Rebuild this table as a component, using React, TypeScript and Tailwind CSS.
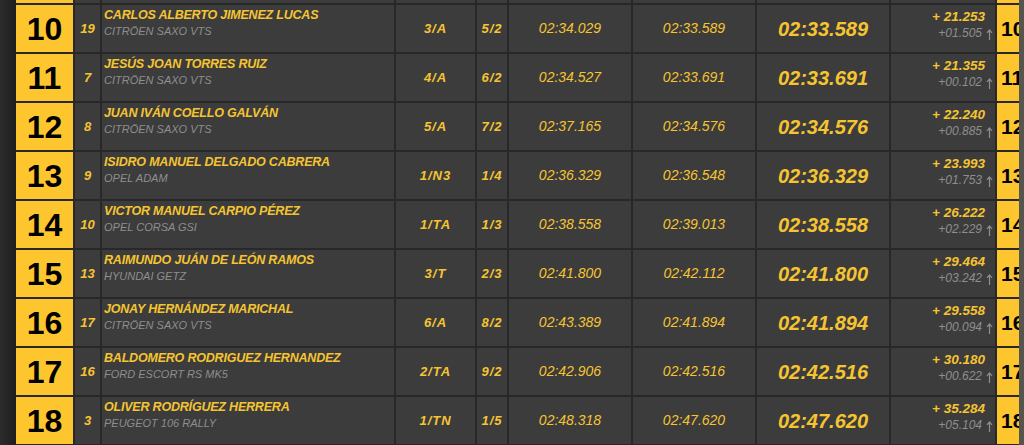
import React from "react";

type Row = {
  pos: string;
  num: string;
  driver: string;
  car: string;
  cls: string;
  cat: string;
  t1: string;
  t2: string;
  best: string;
  diff: string;
  prev: string;
};

const rows: Row[] = [
  { pos: "10", num: "19", driver: "CARLOS ALBERTO JIMENEZ LUCAS", car: "CITRÖEN SAXO VTS", cls: "3/A", cat: "5/2", t1: "02:34.029", t2: "02:33.589", best: "02:33.589", diff: "+ 21.253", prev: "+01.505" },
  { pos: "11", num: "7", driver: "JESÚS JOAN TORRES RUIZ", car: "CITRÖEN SAXO VTS", cls: "4/A", cat: "6/2", t1: "02:34.527", t2: "02:33.691", best: "02:33.691", diff: "+ 21.355", prev: "+00.102" },
  { pos: "12", num: "8", driver: "JUAN IVÁN COELLO GALVÁN", car: "CITRÖEN SAXO VTS", cls: "5/A", cat: "7/2", t1: "02:37.165", t2: "02:34.576", best: "02:34.576", diff: "+ 22.240", prev: "+00.885" },
  { pos: "13", num: "9", driver: "ISIDRO MANUEL DELGADO CABRERA", car: "OPEL ADAM", cls: "1/N3", cat: "1/4", t1: "02:36.329", t2: "02:36.548", best: "02:36.329", diff: "+ 23.993", prev: "+01.753" },
  { pos: "14", num: "10", driver: "VICTOR MANUEL CARPIO PÉREZ", car: "OPEL CORSA GSI", cls: "1/TA", cat: "1/3", t1: "02:38.558", t2: "02:39.013", best: "02:38.558", diff: "+ 26.222", prev: "+02.229" },
  { pos: "15", num: "13", driver: "RAIMUNDO JUÁN DE LEÓN RAMOS", car: "HYUNDAI GETZ", cls: "3/T", cat: "2/3", t1: "02:41.800", t2: "02:42.112", best: "02:41.800", diff: "+ 29.464", prev: "+03.242" },
  { pos: "16", num: "17", driver: "JONAY HERNÁNDEZ MARICHAL", car: "CITRÖEN SAXO VTS", cls: "6/A", cat: "8/2", t1: "02:43.389", t2: "02:41.894", best: "02:41.894", diff: "+ 29.558", prev: "+00.094" },
  { pos: "17", num: "16", driver: "BALDOMERO RODRIGUEZ HERNANDEZ", car: "FORD ESCORT RS MK5", cls: "2/TA", cat: "9/2", t1: "02:42.906", t2: "02:42.516", best: "02:42.516", diff: "+ 30.180", prev: "+00.622" },
  { pos: "18", num: "3", driver: "OLIVER RODRÍGUEZ HERRERA", car: "PEUGEOT 106 RALLY", cls: "1/TN", cat: "1/5", t1: "02:48.318", t2: "02:47.620", best: "02:47.620", diff: "+ 35.284", prev: "+05.104" },
];

const cell = "bg-[#3c3c3c] h-full";

const UpArrow = () => (
  <svg width="7" height="11" viewBox="0 0 7 11" className="ml-[4px] mb-[1px]">
    <path d="M3.5 1 V11 M1 3.8 L3.5 1 L6 3.8" stroke="#8e8e8e" strokeWidth="1.2" fill="none" />
  </svg>
);

// row of the previous page, only its bottom edge shows
const EdgeRow = () => (
  <div className="flex gap-[2px] h-[3px]">
    <div className="w-[57px] bg-[#fec62e]" />
    <div className={`w-[25px] ${cell}`} />
    <div className={`w-[292px] ${cell}`} />
    <div className={`w-[79px] ${cell}`} />
    <div className={`w-[30px] ${cell}`} />
    <div className={`w-[122px] ${cell}`} />
    <div className={`w-[122px] ${cell}`} />
    <div className={`w-[132px] ${cell}`} />
    <div className={`w-[104px] ${cell}`} />
    <div className="w-[22px] bg-[#fec62e]" />
  </div>
);

const ResultRow = ({ r }: { r: Row }) => (
  <div className="flex gap-[2px] h-[47px] italic text-[#f6c431]">
    <div className="w-[57px] bg-[#fec62e] flex items-center justify-center not-italic font-bold text-[32px] text-black">
      {r.pos}
    </div>
    <div className={`w-[25px] ${cell} flex items-center justify-center font-bold text-[13px]`}>
      {r.num}
    </div>
    <div className={`w-[292px] ${cell} pl-[2px] pt-[2px] whitespace-nowrap overflow-hidden`}>
      <div className="font-bold text-[12.5px] leading-[17px] tracking-[-0.2px]">{r.driver}</div>
      <div className="text-[11px] leading-[15px] text-[#8e8e8e]">{r.car}</div>
    </div>
    <div className={`w-[79px] ${cell} flex items-center justify-center font-bold text-[13px] tracking-[1px]`}>
      {r.cls}
    </div>
    <div className={`w-[30px] ${cell} flex items-center justify-center font-bold text-[13px] tracking-[1px]`}>
      {r.cat}
    </div>
    <div className={`w-[122px] ${cell} flex items-center justify-center text-[14px]`}>{r.t1}</div>
    <div className={`w-[122px] ${cell} flex items-center justify-center text-[14px]`}>{r.t2}</div>
    <div className={`w-[132px] ${cell} flex items-center justify-center font-bold text-[20px]`}>
      {r.best}
    </div>
    <div className={`w-[104px] ${cell} flex flex-col items-end pt-[3px]`}>
      <div className="font-bold text-[13.5px] leading-[17px] pr-[10px]">{r.diff}</div>
      <div className="flex items-end text-[12px] leading-[16px] text-[#8e8e8e] pr-[2px]">
        <span>{r.prev}</span>
        <UpArrow />
      </div>
    </div>
    <div className="w-[22px] bg-[#fec62e] overflow-hidden whitespace-nowrap flex items-center pl-[4px] not-italic font-bold text-[21px] text-black">
      {r.pos}
    </div>
  </div>
);

export default function App() {
  return (
    <div
      className="w-[1024px] h-[445px] overflow-hidden flex bg-[#282828]"
      style={{ fontFamily: '"Liberation Sans", Arial, sans-serif' }}
    >
      <div className="w-[16px] shrink-0 bg-gradient-to-r from-[#2c2c2c] to-[#1e1e1e]" />
      <div className="flex flex-col gap-[2px] shrink-0">
        <EdgeRow />
        {rows.map((r) => (
          <ResultRow key={r.pos} r={r} />
        ))}
      </div>
      <div className="flex-1 bg-[#56554d]" />
    </div>
  );
}
